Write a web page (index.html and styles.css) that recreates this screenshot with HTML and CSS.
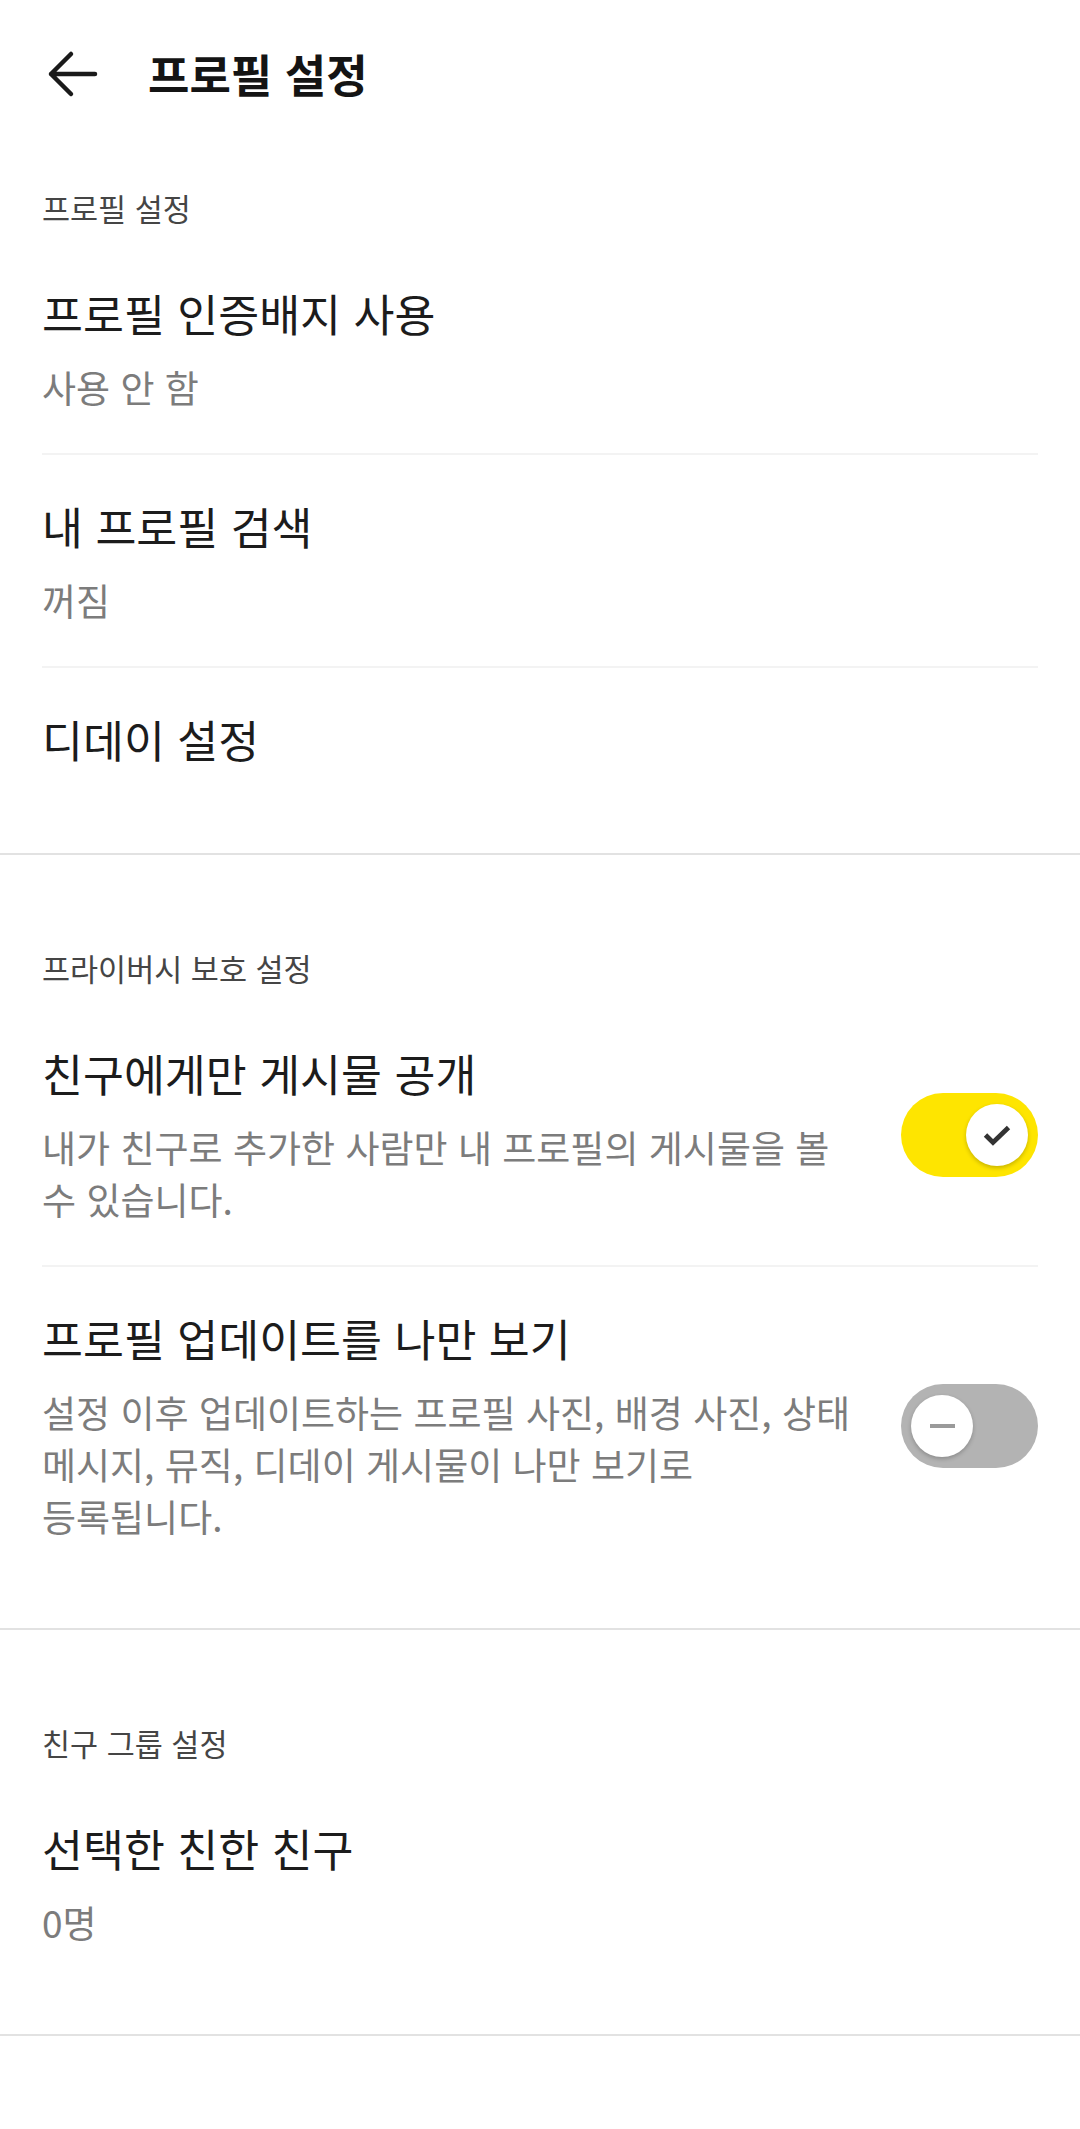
FILE: index.html
```html
<!DOCTYPE html>
<html lang="ko">
<head>
    <meta charset="UTF-8">
    <meta name="viewport" content="width=device-width, initial-scale=1.0">
    <title>프로필 설정</title>
    <link rel="stylesheet" href="styles.css">
</head>
<body>
    <header class="app-bar">
        <button class="back-button" aria-label="뒤로">
            <svg width="56" height="56" viewBox="0 0 56 56">
                <path d="M6 28H50M26 8L6 28L26 48" fill="none" stroke="#1a1a1a" stroke-width="4.5" stroke-linecap="round" stroke-linejoin="round"/>
            </svg>
        </button>
        <h1 class="app-title">프로필 설정</h1>
    </header>

    <section class="section">
        <h2 class="section-title">프로필 설정</h2>
        <div class="item">
            <div class="item-text">
                <div class="item-title">프로필 인증배지 사용</div>
                <div class="item-desc">사용 안 함</div>
            </div>
        </div>
        <div class="item">
            <div class="item-text">
                <div class="item-title">내 프로필 검색</div>
                <div class="item-desc">꺼짐</div>
            </div>
        </div>
        <div class="item">
            <div class="item-text">
                <div class="item-title">디데이 설정</div>
            </div>
        </div>
    </section>

    <section class="section">
        <h2 class="section-title">프라이버시 보호 설정</h2>
        <div class="item">
            <div class="item-text">
                <div class="item-title">친구에게만 게시물 공개</div>
                <div class="item-desc">내가 친구로 추가한 사람만 내 프로필의 게시물을 볼 수 있습니다.</div>
            </div>
            <div class="toggle toggle-on">
                <span class="knob">
                    <svg width="62" height="62" viewBox="0 0 62 62">
                        <path d="M19.5 31L27 38.5L42.5 23.5" fill="none" stroke="#333" stroke-width="4.8" stroke-linejoin="miter"/>
                    </svg>
                </span>
            </div>
        </div>
        <div class="item">
            <div class="item-text">
                <div class="item-title">프로필 업데이트를 나만 보기</div>
                <div class="item-desc">설정 이후 업데이트하는 프로필 사진, 배경 사진, 상태 메시지, 뮤직, 디데이 게시물이 나만 보기로 등록됩니다.</div>
            </div>
            <div class="toggle toggle-off">
                <span class="knob">
                    <svg width="62" height="62" viewBox="0 0 62 62">
                        <path d="M19 31H44" fill="none" stroke="#9a9a9a" stroke-width="4"/>
                    </svg>
                </span>
            </div>
        </div>
    </section>

    <section class="section">
        <h2 class="section-title">친구 그룹 설정</h2>
        <div class="item">
            <div class="item-text">
                <div class="item-title">선택한 친한 친구</div>
                <div class="item-desc">0명</div>
            </div>
        </div>
    </section>
</body>
</html>
```

FILE: styles.css
```css
:root {
    --text-color: #1c1c1c;
    --sub-text: #7c7c7c;
    --section-text: #454545;
    --kakao-yellow: #FEE500;
    --toggle-off: #b3b3b3;
    --divider-light: #f3f3f3;
    --divider: #e2e2e2;
}
body {
    margin: 0;
    font-family: "Noto Sans CJK KR", "Noto Sans", sans-serif;
    background-color: #FFFFFF;
    color: var(--text-color);
}
.app-bar {
    height: 148px;
    display: flex;
    align-items: center;
    padding-left: 45px;
    gap: 47px;
}
.back-button {
    width: 56px;
    height: 56px;
    padding: 0;
    border: none;
    background: none;
    display: flex;
}
.app-title {
    margin: 0;
    font-size: 45px;
    font-weight: 700;
    line-height: 56px;
    color: #141414;
}
.section {
    padding: 93px 42px 46px;
    border-bottom: 2px solid var(--divider);
}
.app-bar + .section {
    padding-top: 40px;
}
.section-title {
    margin: 0 0 14px;
    font-size: 30.5px;
    font-weight: 400;
    line-height: 40px;
    color: var(--section-text);
}
.item {
    display: flex;
    align-items: center;
    gap: 39px;
    padding: 43px 0 40px;
}
.item + .item {
    border-top: 2px solid var(--divider-light);
}
.item-text {
    flex: 1;
    min-width: 0;
}
.item-title {
    font-size: 44.5px;
    line-height: 56px;
    color: var(--text-color);
}
.item-desc {
    max-width: 815px;
    margin-top: 20px;
    font-size: 37px;
    line-height: 52px;
    color: var(--sub-text);
    word-break: keep-all;
}

/* switch */
.toggle {
    position: relative;
    flex: none;
    width: 137px;
    height: 84px;
    border-radius: 42px;
}
.toggle-on {
    background-color: var(--kakao-yellow);
}
.toggle-off {
    background-color: var(--toggle-off);
}
.knob {
    position: absolute;
    top: 11px;
    width: 62px;
    height: 62px;
    border-radius: 50%;
    background-color: #FFFFFF;
    box-shadow: 0 2px 4px rgba(0,0,0,0.22);
    display: flex;
}
.toggle-on .knob {
    right: 10px;
}
.toggle-off .knob {
    left: 10px;
}
```
